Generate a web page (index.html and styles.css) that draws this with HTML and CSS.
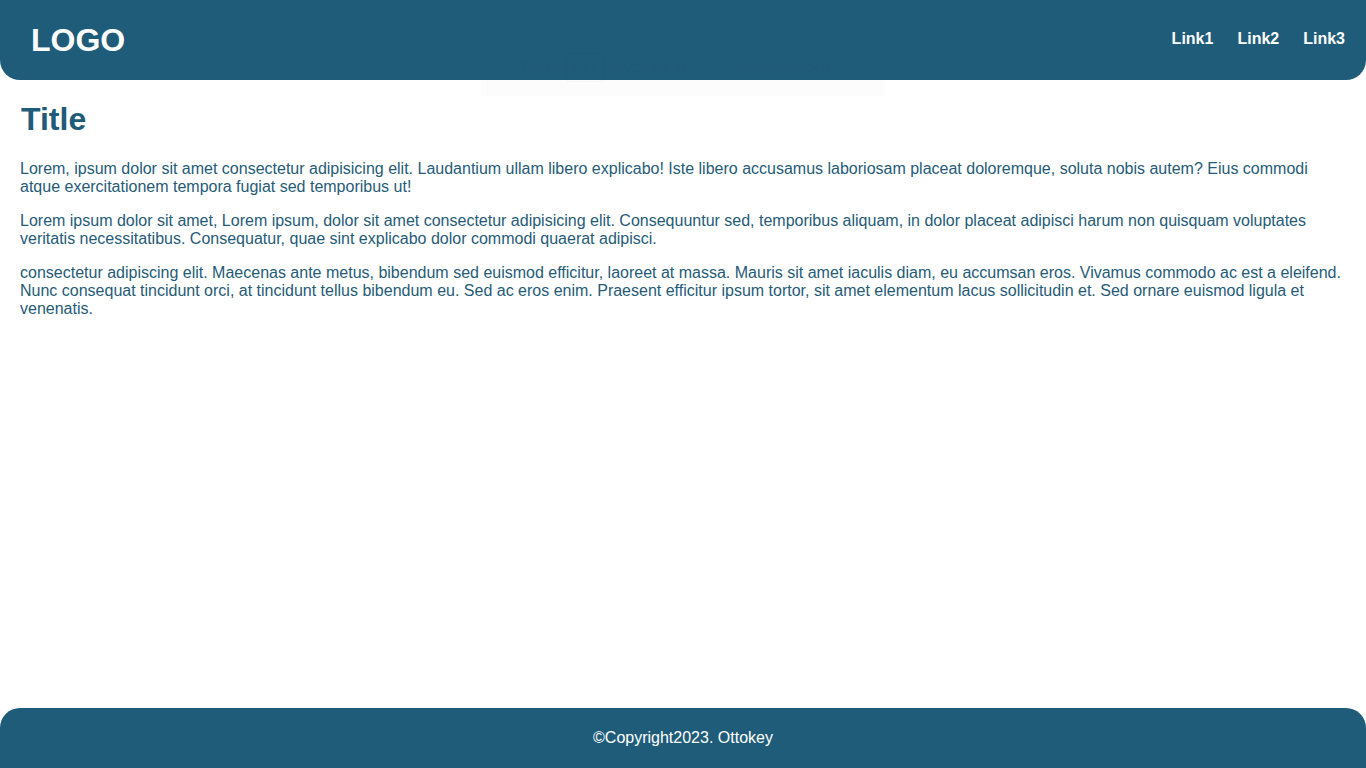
FILE: index.html
```html
<!DOCTYPE html>
<html lang="en">
<head>
<meta charset="utf-8">
<title>Page</title>
<link rel="stylesheet" href="styles.css">
</head>
<body>
<div class="page">
  <header class="header">
    <div class="logo">LOGO</div>
    <nav class="nav">
      <a href="#" class="nav-link">Link1</a>
      <a href="#" class="nav-link">Link2</a>
      <a href="#" class="nav-link">Link3</a>
    </nav>
  </header>
  <main class="main">
    <h1 class="title">Title</h1>
    <p class="text">Lorem, ipsum dolor sit amet consectetur adipisicing elit. Laudantium ullam libero explicabo! Iste libero accusamus laboriosam placeat doloremque, soluta nobis autem? Eius commodi atque exercitationem tempora fugiat sed temporibus ut!</p>
    <p class="text">Lorem ipsum dolor sit amet, Lorem ipsum, dolor sit amet consectetur adipisicing elit. Consequuntur sed, temporibus aliquam, in dolor placeat adipisci harum non quisquam voluptates veritatis necessitatibus. Consequatur, quae sint explicabo dolor commodi quaerat adipisci.</p>
    <p class="text">consectetur adipiscing elit. Maecenas ante metus, bibendum sed euismod efficitur, laoreet at massa. Mauris sit amet iaculis diam, eu accumsan eros. Vivamus commodo ac est a eleifend. Nunc consequat tincidunt orci, at tincidunt tellus bibendum eu. Sed ac eros enim. Praesent efficitur ipsum tortor, sit amet elementum lacus sollicitudin et. Sed ornare euismod ligula et venenatis.</p>
  </main>
  <footer class="footer">©Copyright2023. Ottokey</footer>
</div>
<div class="fs-notice">Tekan <span class="fs-key">F11</span> untuk keluar dari mode layar penuh</div>
</body>
</html>
```
FILE: styles.css
```css
* { box-sizing: border-box; }
html, body { margin: 0; padding: 0; }
body {
  font-family: "Liberation Sans", Arial, sans-serif;
  color: #1f5c79;
  background: #fff;
}
.page {
  min-height: 768px;
  display: flex;
  flex-direction: column;
}
.header {
  height: 80px;
  background: #1f5c79;
  border-radius: 0 0 20px 20px;
  display: flex;
  align-items: center;
  justify-content: space-between;
  padding: 0 21px 0 31px;
}
.logo {
  color: #fff;
  font-weight: bold;
  font-size: 32px;
}
.nav {
  display: flex;
  gap: 24px;
  margin-bottom: 3px;
}
.nav-link {
  color: #fff;
  font-weight: bold;
  font-size: 16px;
  text-decoration: none;
}
.main {
  flex: 1;
  padding: 0 20px;
}
.title {
  font-size: 32px;
  margin: 21px 0 22px 1px;
  color: #1f5c79;
}
.text {
  font-size: 16px;
  margin: 16px 0;
  color: #265b77;
}
.footer {
  height: 60px;
  background: #1f5c79;
  border-radius: 20px 20px 0 0;
  color: #fff;
  font-size: 16px;
  display: flex;
  align-items: center;
  justify-content: center;
}
.fs-notice {
  position: absolute;
  top: 53px;
  left: 481px;
  width: 404px;
  height: 43px;
  background: linear-gradient(transparent 27px, rgba(0, 0, 0, 0.012) 27px);
  color: rgba(0, 0, 0, 0.035);
  font-family: "Open Sans", sans-serif;
  font-size: 14px;
  display: flex;
  align-items: flex-start;
  justify-content: center;
  gap: 8px;
  padding-top: 4px;
  pointer-events: none;
}
.fs-key {
  border: 1px solid rgba(0, 0, 0, 0.02);
  padding: 4px 6px;
  margin-top: -4px;
}
```
